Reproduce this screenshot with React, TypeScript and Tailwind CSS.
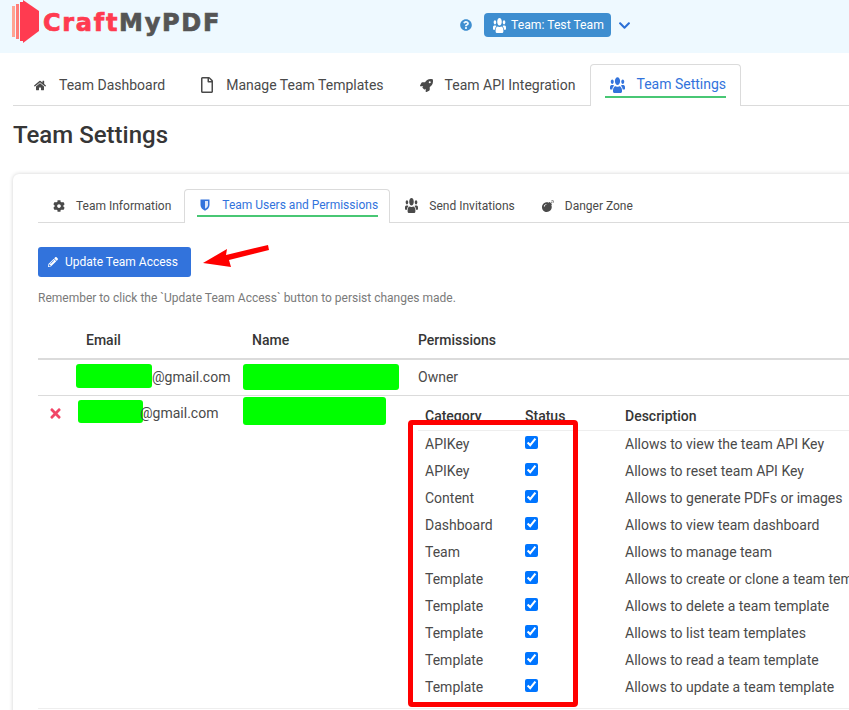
import React from 'react';
import { FaBomb, FaChevronDown, FaCog, FaHome, FaPencilAlt, FaQuestionCircle, FaRegFile, FaRocket, FaTimes, FaUsers } from 'react-icons/fa';

const permissions = [
  ['APIKey', 'Allows to view the team API Key'],
  ['APIKey', 'Allows to reset team API Key'],
  ['Content', 'Allows to generate PDFs or images'],
  ['Dashboard', 'Allows to view team dashboard'],
  ['Team', 'Allows to manage team'],
  ['Template', 'Allows to create or clone a team template'],
  ['Template', 'Allows to delete a team template'],
  ['Template', 'Allows to list team templates'],
  ['Template', 'Allows to read a team template'],
  ['Template', 'Allows to update a team template'],
];

function Logo() {
  return (
    <div className="flex items-start w-[207px] shrink-0">
      <svg width="28" height="43" viewBox="0 0 28 43" className="shrink-0">
        <rect x="0" y="6" width="3" height="31" fill="#ffa493" />
        <rect x="4" y="4" width="3" height="35" fill="#ff7d78" />
        <rect x="8" y="2" width="3" height="39" fill="#ff3b50" />
        <path d="M11 0 L27 11 V31 L11 43 Z" fill="#ff3b50" />
      </svg>
      <span className="mt-[9px] ml-[3px] text-[24px] leading-[28px] font-bold tracking-[1.7px] whitespace-nowrap [-webkit-text-stroke:0.7px] font-['DejaVu_Sans',sans-serif]">
        <span className="text-[#ff3b50]">Craft</span>
        <span className="text-[#555555]">MyPDF</span>
      </span>
    </div>
  );
}

function ShieldIcon() {
  return (
    <svg width="10" height="12" viewBox="0 0 10 12" className="shrink-0">
      <path d="M0.5 0.5 H9.5 V6 C9.5 9 7 10.8 5 11.7 C3 10.8 0.5 9 0.5 6 Z" fill="#3273dc" />
      <path d="M5 2 H8 V6 C8 7.8 6.5 9 5 9.8 Z" fill="#dbe6fa" />
    </svg>
  );
}

export default function App() {
  return (
    <div className="relative w-[849px] h-[710px] overflow-hidden bg-white text-[#4a4a4a] font-['Roboto',sans-serif]">
      {/* Header */}
      <header className="h-[53px] bg-[#eef9ff] flex items-start pl-3">
        <Logo />
        <div className="ml-[241px] mt-[13px] flex items-center">
          <FaQuestionCircle className="text-[#3e8ed0] text-[12px] mr-3" />
          <div className="h-6 w-[127px] rounded bg-[#3e8ed0] text-white text-[12.2px] whitespace-nowrap flex items-center pl-[9px] gap-[5px]">
            <FaUsers preserveAspectRatio="none" className="w-[13px] h-[17px] shrink-0" />
            <span>Team: Test Team</span>
          </div>
          <FaChevronDown className="text-[#2b6fd6] text-[13px] ml-[7px] mt-[1px]" />
        </div>
      </header>

      {/* Main tabs */}
      <nav className="ml-[13px] mt-[11px] h-[42px] border-b border-[#dbdbdb] flex items-stretch text-[14px] whitespace-nowrap">
        <a className="flex items-center pl-[21px] pr-[18px] pt-px" href="#">
          <FaHome className="text-[11px] w-[12px] mr-[13px]" />
          Team Dashboard
        </a>
        <a className="flex items-center pl-[18px] pr-[18px] pt-px" href="#">
          <FaRegFile className="w-[12px] h-[16px] mr-[13px]" />
          Manage Team Templates
        </a>
        <a className="flex items-center pl-[18px] pr-[15px] pt-px" href="#">
          <FaRocket className="text-[13px] mr-[12px]" />
          Team API Integration
        </a>
        <a className="flex items-start w-[151px] h-[42px] bg-white border border-b-0 border-[#dbdbdb] rounded-t pl-[14px] pt-[8px] text-[#3273dc]" href="#">
          <span className="flex items-center h-[23px] w-[121px] border-b-2 border-[#48c774] box-content">
            <FaUsers preserveAspectRatio="none" className="w-[15px] h-[18px] ml-[5px] mr-[11px] shrink-0" />
            Team Settings
          </span>
        </a>
      </nav>

      <h1 className="ml-[13px] mt-[13px] text-[24px] leading-[32px] font-medium text-[#363636]">Team Settings</h1>

      {/* Card */}
      <section className="ml-[13px] mt-[23px] w-[900px] h-[560px] rounded-md bg-white shadow-[0_0_4px_rgba(10,10,10,0.18)] pl-[25px] pt-[15px]">
        <div className="h-[34px] border-b border-[#dbdbdb] flex items-stretch text-[12px] whitespace-nowrap">
          <a className="flex items-center pl-[15px] pr-[13px]" href="#">
            <FaCog className="text-[12px] mr-[11px]" />
            Team Information
          </a>
          <a className="flex items-start w-[206px] h-[34px] bg-white border border-b-0 border-[#dbdbdb] rounded-t pl-[12px] pt-[5px] text-[#3273dc]" href="#">
            <span className="flex items-center h-[20px] w-[181px] border-b-2 border-[#48c774] box-content">
              <span className="ml-[3px] mr-[12px]"><ShieldIcon /></span>
              Team Users and Permissions
            </span>
          </a>
          <a className="flex items-center pl-[15px] pr-[27px]" href="#">
            <FaUsers preserveAspectRatio="none" className="w-[13px] h-[17px] mr-[11px]" />
            Send Invitations
          </a>
          <a className="flex items-center" href="#">
            <FaBomb className="text-[12px] mr-[11px]" />
            Danger Zone
          </a>
        </div>

        <button className="mt-6 h-[30px] w-[153px] rounded-[3px] bg-[#3273dc] text-white text-[12px] whitespace-nowrap flex items-center pl-[10px] gap-[7px]">
          <FaPencilAlt className="text-[10px]" />
          Update Team Access
        </button>
        <p className="mt-[13px] text-[12px] leading-[16px] text-[#7a7a7a]">Remember to click the `Update Team Access` button to persist changes made.</p>

        {/* Users table */}
        <div className="mt-[24px] text-[14px]">
          <div className="h-[31px] grid grid-cols-[38px_167px_175px_1fr] border-b-2 border-[#dbdbdb] font-medium text-[#363636] items-start leading-[22px] -mt-px">
            <span />
            <span className="pl-[10px]">Email</span>
            <span className="pl-[9px]">Name</span>
            <span>Permissions</span>
          </div>
          <div className="h-[36px] grid grid-cols-[38px_167px_175px_1fr] border-b border-[#dbdbdb]">
            <span />
            <div className="flex items-start pt-[4px]">
              <span className="w-[76px] h-[24px] rounded-[3px] bg-[#00ff00]" />
              <span className="leading-[26px]">@gmail.com</span>
            </div>
            <div className="pt-[4px]">
              <div className="w-[156px] h-[26px] rounded-[3px] bg-[#00ff00]" />
            </div>
            <span className="pt-[6px] leading-[22px]">Owner</span>
          </div>
          <div className="h-[313px] grid grid-cols-[38px_167px_175px_1fr] border-b border-[#eeeeee]">
            <div className="pt-[10px] pl-[10px]">
              <FaTimes className="text-[15px] text-[#f14668]" />
            </div>
            <div className="flex items-start pt-[4px] pl-[2px]">
              <span className="w-[65px] h-[23px] rounded-[3px] bg-[#00ff00]" />
              <span className="-ml-[3px] leading-[26px]">@gmail.com</span>
            </div>
            <div className="pt-[1px]">
              <div className="w-[143px] h-[28px] rounded-[3px] bg-[#00ff00]" />
            </div>
            <div className="pt-[9px]">
              <div className="h-[26px] grid grid-cols-[100px_100px_1fr] pl-[7px] border-b border-[#eeeeee] font-medium text-[#363636] leading-[22px]">
                <span>Category</span>
                <span>Status</span>
                <span>Description</span>
              </div>
              {permissions.map(([category, description], i) => (
                <div key={i} className="h-[27px] grid grid-cols-[100px_100px_1fr] pl-[7px] items-center whitespace-nowrap">
                  <span>{category}</span>
                  <span className="flex items-center -mt-[4px]">
                    <input type="checkbox" defaultChecked className="m-0 w-[13px] h-[13px]" />
                  </span>
                  <span>{description}</span>
                </div>
              ))}
            </div>
          </div>
        </div>
      </section>

      {/* Annotations drawn on top of the screenshot */}
      <div className="absolute left-[408px] top-[420px] w-[170px] h-[287px] border-[5px] border-[#ff0000] rounded-[4px]" />
      <svg className="absolute left-[200px] top-[243px]" width="72" height="26" viewBox="0 0 72 26">
        <path d="M3 20 L27 6 L26 12 L68 2 L69 7 L29 17 L31 24 Z" fill="#ff0000" />
      </svg>
    </div>
  );
}
